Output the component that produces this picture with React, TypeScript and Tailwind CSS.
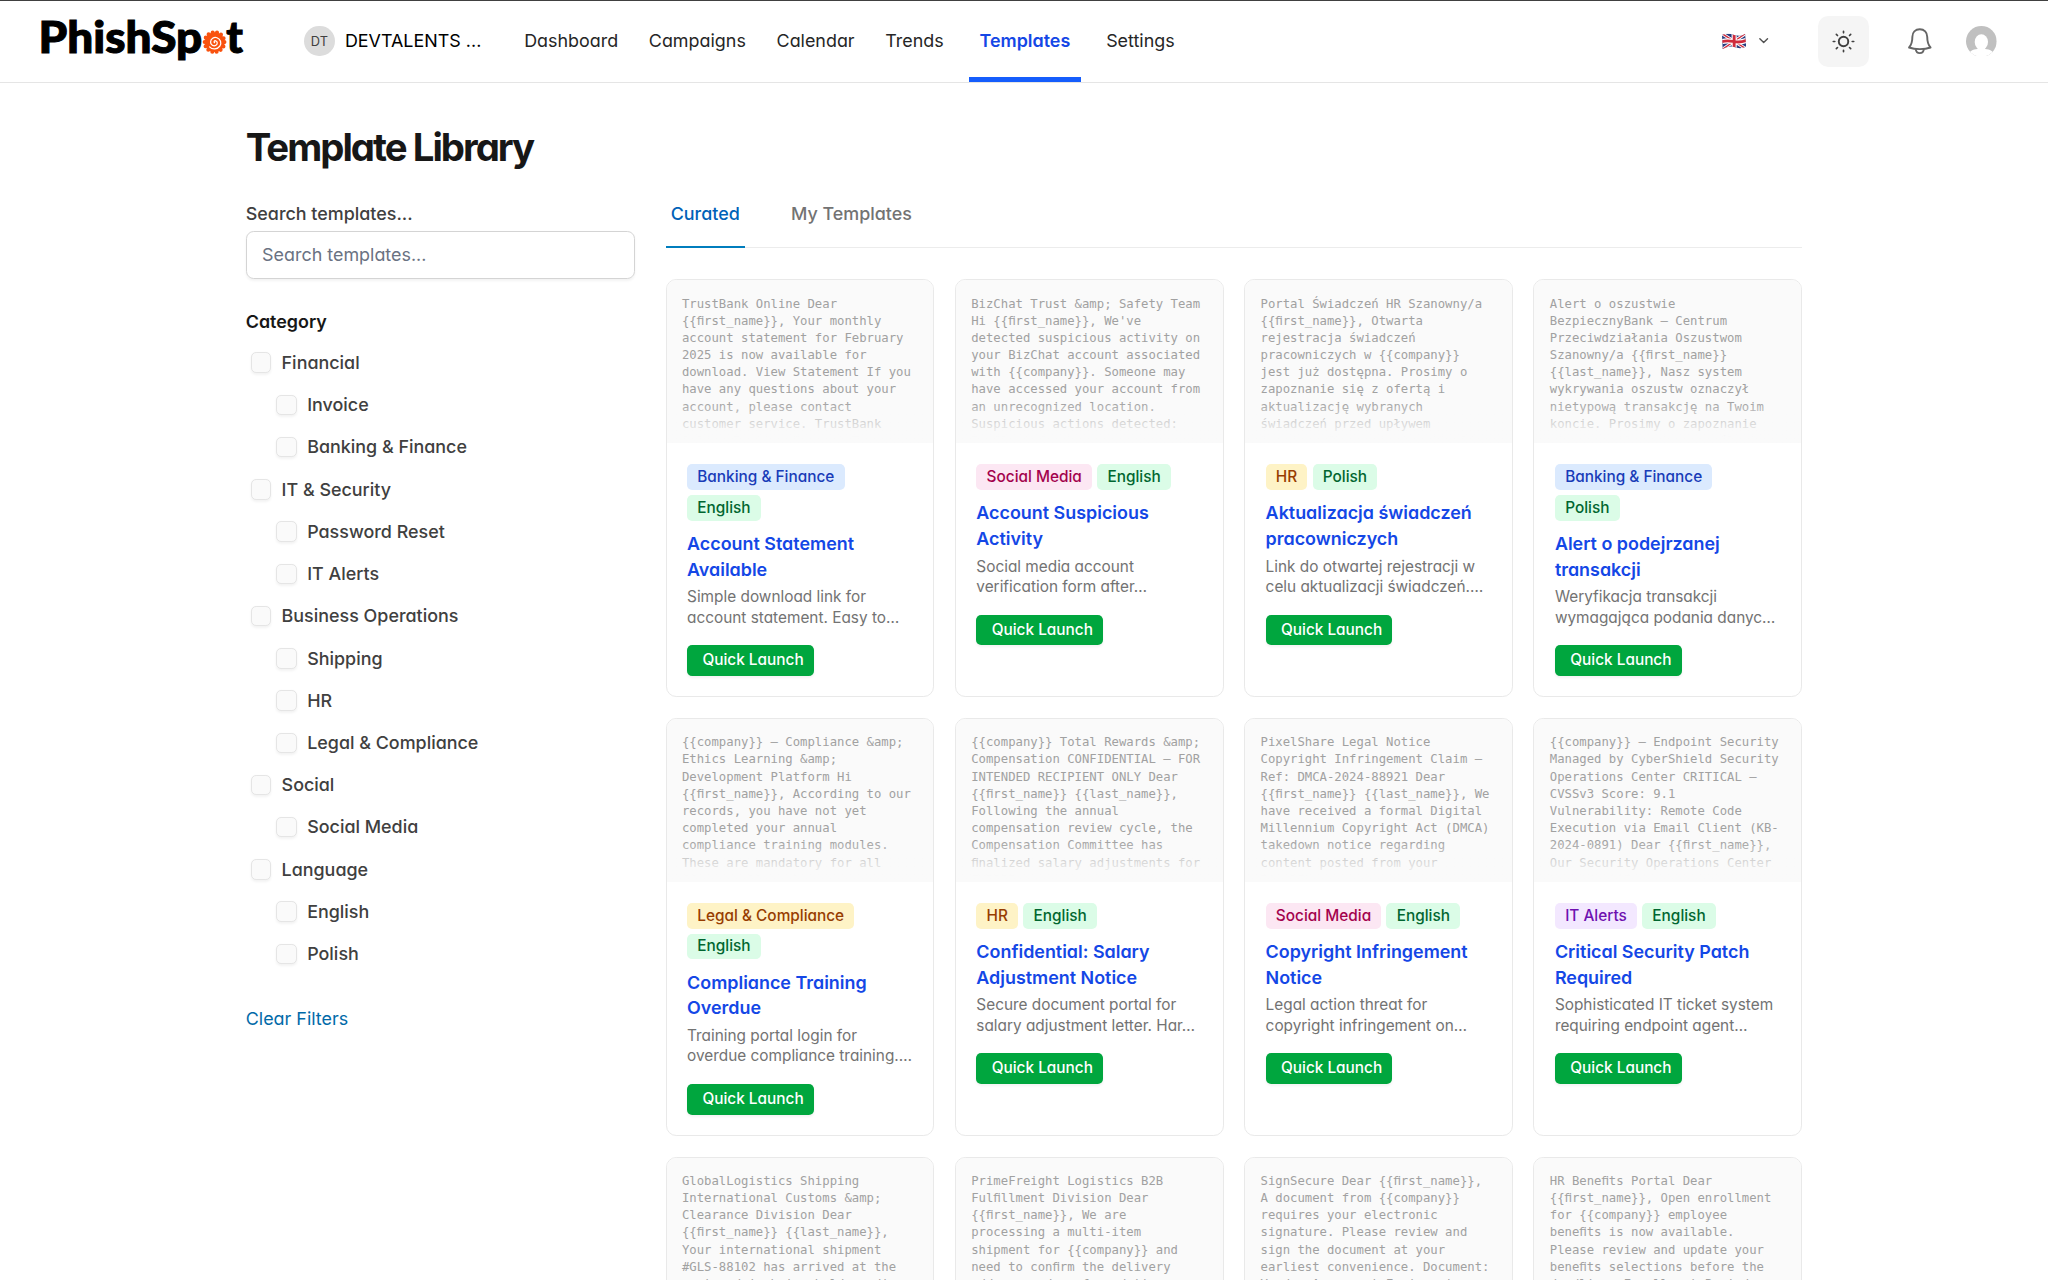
import { ChevronDown } from "lucide-react";

type Tag = "Banking & Finance" | "English" | "Polish" | "Social Media" | "HR" | "Legal & Compliance" | "IT Alerts";

type Template = {
  title: string;
  description: string;
  tags: Tag[];
  preview: string;
};

const navItems = ["Dashboard", "Campaigns", "Calendar", "Trends", "Templates", "Settings"];

const categories = [
  { name: "Financial", children: ["Invoice", "Banking & Finance"] },
  { name: "IT & Security", children: ["Password Reset", "IT Alerts"] },
  { name: "Business Operations", children: ["Shipping", "HR", "Legal & Compliance"] },
  { name: "Social", children: ["Social Media"] },
  { name: "Language", children: ["English", "Polish"] },
];

const tagStyles: Record<Tag, string> = {
  "Banking & Finance": "bg-blue-100 text-blue-800",
  English: "bg-green-100 text-green-800",
  Polish: "bg-green-100 text-green-800",
  "Social Media": "bg-pink-100 text-pink-800",
  HR: "bg-amber-100 text-amber-800",
  "Legal & Compliance": "bg-amber-100 text-amber-800",
  "IT Alerts": "bg-purple-100 text-purple-800",
};

const templates: Template[] = [
  {
    title: "Account Statement\nAvailable",
    description: "Simple download link for\naccount statement. Easy to…",
    tags: ["Banking & Finance", "English"],
    preview: `TrustBank Online Dear
{{first_name}}, Your monthly
account statement for February
2025 is now available for
download. View Statement If you
have any questions about your
account, please contact
customer service. TrustBank
Online Banking Support Team`,
  },
  {
    title: "Account Suspicious\nActivity",
    description: "Social media account\nverification form after…",
    tags: ["Social Media", "English"],
    preview: `BizChat Trust &amp; Safety Team
Hi {{first_name}}, We've
detected suspicious activity on
your BizChat account associated
with {{company}}. Someone may
have accessed your account from
an unrecognized location.
Suspicious actions detected:
Profile info changes`,
  },
  {
    title: "Aktualizacja świadczeń\npracowniczych",
    description: "Link do otwartej rejestracji w\ncelu aktualizacji świadczeń.…",
    tags: ["HR", "Polish"],
    preview: `Portal Świadczeń HR Szanowny/a
{{first_name}}, Otwarta
rejestracja świadczeń
pracowniczych w {{company}}
jest już dostępna. Prosimy o
zapoznanie się z ofertą i
aktualizację wybranych
świadczeń przed upływem
terminu. Okno rejestracji: Od`,
  },
  {
    title: "Alert o podejrzanej\ntransakcji",
    description: "Weryfikacja transakcji\nwymagająca podania danyc…",
    tags: ["Banking & Finance", "Polish"],
    preview: `Alert o oszustwie
BezpiecznyBank – Centrum
Przeciwdziałania Oszustwom
Szanowny/a {{first_name}}
{{last_name}}, Nasz system
wykrywania oszustw oznaczył
nietypową transakcję na Twoim
koncie. Prosimy o zapoznanie
się z poniższymi szczegółami`,
  },
  {
    title: "Compliance Training\nOverdue",
    description: "Training portal login for\noverdue compliance training.…",
    tags: ["Legal & Compliance", "English"],
    preview: `{{company}} – Compliance &amp;
Ethics Learning &amp;
Development Platform Hi
{{first_name}}, According to our
records, you have not yet
completed your annual
compliance training modules.
These are mandatory for all
{{company}} employees`,
  },
  {
    title: "Confidential: Salary\nAdjustment Notice",
    description: "Secure document portal for\nsalary adjustment letter. Har…",
    tags: ["HR", "English"],
    preview: `{{company}} Total Rewards &amp;
Compensation CONFIDENTIAL – FOR
INTENDED RECIPIENT ONLY Dear
{{first_name}} {{last_name}},
Following the annual
compensation review cycle, the
Compensation Committee has
finalized salary adjustments for
FY2025.`,
  },
  {
    title: "Copyright Infringement\nNotice",
    description: "Legal action threat for\ncopyright infringement on…",
    tags: ["Social Media", "English"],
    preview: `PixelShare Legal Notice
Copyright Infringement Claim –
Ref: DMCA-2024-88921 Dear
{{first_name}} {{last_name}}, We
have received a formal Digital
Millennium Copyright Act (DMCA)
takedown notice regarding
content posted from your
PixelShare`,
  },
  {
    title: "Critical Security Patch\nRequired",
    description: "Sophisticated IT ticket system\nrequiring endpoint agent…",
    tags: ["IT Alerts", "English"],
    preview: `{{company}} – Endpoint Security
Managed by CyberShield Security
Operations Center CRITICAL –
CVSSv3 Score: 9.1
Vulnerability: Remote Code
Execution via Email Client (KB-
2024-0891) Dear {{first_name}},
Our Security Operations Center
has identified`,
  },
  {
    title: "Customs Clearance\nRequired",
    description: "Customs payment form for\ninternational shipment…",
    tags: ["Banking & Finance", "English"],
    preview: `GlobalLogistics Shipping
International Customs &amp;
Clearance Division Dear
{{first_name}} {{last_name}},
Your international shipment
#GLS-88102 has arrived at the
port and is being held pending`,
  },
  {
    title: "Delivery Confirmation\nNeeded",
    description: "Delivery confirmation for\nmulti-item shipment…",
    tags: ["HR", "English"],
    preview: `PrimeFreight Logistics B2B
Fulfillment Division Dear
{{first_name}}, We are
processing a multi-item
shipment for {{company}} and
need to confirm the delivery
address and preferred time`,
  },
  {
    title: "Document Signature\nRequest",
    description: "Electronic signature request\nfor a document…",
    tags: ["HR", "English"],
    preview: `SignSecure Dear {{first_name}},
A document from {{company}}
requires your electronic
signature. Please review and
sign the document at your
earliest convenience. Document:
Vendor Agreement Expires in`,
  },
  {
    title: "Employee Benefits\nUpdate",
    description: "Open enrollment link for\nemployee benefits…",
    tags: ["HR", "English"],
    preview: `HR Benefits Portal Dear
{{first_name}}, Open enrollment
for {{company}} employee
benefits is now available.
Please review and update your
benefits selections before the
deadline. Enrollment Period`,
  },
];

function Logo() {
  return (
    <a href="#" className="flex h-8 w-[158px] items-center" aria-label="PhishSpot">
      <svg viewBox="0 0 158 32" className="h-8 w-[158px] overflow-visible">
        <g fontFamily="Lato, sans-serif" fontSize="33.7" fontWeight="900" fill="#000" stroke="#000" strokeWidth="0.8">
          <text x="-2" y="24.8" textLength="128" lengthAdjust="spacingAndGlyphs">PhishSp</text>
          <text x="144.8" y="24.8" textLength="13" lengthAdjust="spacingAndGlyphs">t</text>
        </g>
        <circle cx="135.6" cy="16.5" r="7.8" fill="#f9520f" />
        <circle
          cx="135.6"
          cy="16.5"
          r="7.7"
          fill="none"
          stroke="#f9520f"
          strokeWidth="3.2"
          strokeLinecap="round"
          strokeDasharray="0 3.456"
        />
        <path
          d="M135.6 16.9c-.8-.5-.2-1.7.9-1.4 1.5.4 1.6 2.7.2 3.5-1.9 1.1-4.3-.4-4.2-2.6.1-2.5 2.6-4.1 5-3.3 2.8.9 3.8 4.2 2.2 6.5-1.9 2.700-5.8 3-8 .6"
          fill="none"
          stroke="#fff"
          strokeWidth="1"
          strokeLinecap="round"
        />
      </svg>
    </a>
  );
}

function UkFlag() {
  return (
    <svg viewBox="0 0 38 26" className="h-[13px] w-[19px]">
      <defs>
        <clipPath id="flag">
          <path d="M0 3C7 0 12 1 19 3s12 2 17-2l2 20c-7 4-13 3-19 1s-11-1-18 3z" />
        </clipPath>
      </defs>
      <g clipPath="url(#flag)">
        <rect width="38" height="26" fill="#273a7e" />
        <path d="M0 1l38 24M38 0L0 26" stroke="#fff" strokeWidth="5" />
        <path d="M0 1l38 24M38 0L0 26" stroke="#cf2b3c" strokeWidth="2" />
        <path d="M19 0v26M0 13.5c8-2.5 13-1 19 0s12 1 19-2" stroke="#fff" strokeWidth="8" fill="none" />
        <path d="M19 0v26M0 13.5c8-2.5 13-1 19 0s12 1 19-2" stroke="#cf2b3c" strokeWidth="4.5" fill="none" />
      </g>
    </svg>
  );
}

function SunIcon() {
  return (
    <svg viewBox="0 0 18 18" className="size-[18px]" fill="none" stroke="#404040" strokeWidth="1.5">
      <circle cx="9" cy="9" r="3.7" />
      <path
        d="M9 1v1.2M9 15.8V17M1 9h1.2M15.8 9H17M3.4 3.4l.9.9M13.7 13.7l.9.9M14.6 3.4l-.9.9M4.3 13.7l-.9.9"
        strokeLinecap="round"
        strokeWidth="1.3"
      />
    </svg>
  );
}

function BellIcon() {
  return (
    <svg viewBox="0 0 20 22" className="h-[22px] w-5" fill="none" stroke="#666" strokeWidth="1.5" strokeLinejoin="round">
      <path d="M10 1.8c-3.5 0-5.8 2.5-5.8 5.9 0 4.3-.5 6.2-2.6 8.3 2.5.9 5.4 1.3 8.4 1.3s5.900-.4 8.400-1.3c-2.1-2.1-2.6-4-2.6-8.3 0-3.4-2.3-5.9-5.8-5.9z" />
      <path d="M6.8 17.2c.3 2.1 1.5 3.2 3.2 3.2s2.9-1.1 3.2-3.2" />
    </svg>
  );
}

function Header() {
  return (
    <header className="flex h-[65px] items-center border-b border-neutral-200 pl-8 pr-10">
      <Logo />
      <div className="ml-[47.5px] flex w-[143px] items-center gap-2">
        <span className="flex size-6 items-center justify-center rounded-full bg-[#dcdcdc] text-[10px] text-neutral-700">
          DT
        </span>
        <span className="text-sm whitespace-nowrap text-black">DEVTALENTS ...</span>
      </div>
      <nav className="ml-[21px] flex h-full items-stretch gap-2 text-sm">
        {navItems.map((item) => (
          <a
            key={item}
            href="#"
            className={
              item === "Templates"
                ? "mx-1 flex items-center border-b-4 border-blue-600 px-2 pt-1 font-semibold text-blue-700"
                : "flex items-center px-2 text-neutral-800"
            }
          >
            {item}
          </a>
        ))}
      </nav>
      <div className="ml-auto flex items-center">
        <UkFlag />
        <ChevronDown className="ml-[7.5px] size-3 text-neutral-600" strokeWidth={2.2} />
        <button className="ml-[36.5px] flex size-10 items-center justify-center rounded-lg bg-neutral-100">
          <SunIcon />
        </button>
        <div className="ml-[29.5px]">
          <BellIcon />
        </div>
        <svg viewBox="0 0 24 24" className="ml-[26.5px] size-6">
          <clipPath id="avatar">
            <circle cx="12" cy="12" r="12" />
          </clipPath>
          <g clipPath="url(#avatar)">
            <rect width="24" height="24" fill="#c0c0c0" />
            <ellipse cx="12" cy="12.5" rx="5.2" ry="6" fill="#fff" />
            <path d="M9 16h6v2c4 .3 6.5 1.5 7.5 6h-21c1-4.5 3.5-5.7 7.5-6z" fill="#fff" />
          </g>
        </svg>
      </div>
    </header>
  );
}

function FilterRow({ label, nested }: { label: string; nested?: boolean }) {
  return (
    <label className={nested ? "ml-6 flex h-[33px] items-center gap-2" : "ml-1 flex h-[33px] items-center gap-2"}>
      <span className="size-4 rounded border border-neutral-200 bg-neutral-50 shadow-xs" />
      <span className="text-sm font-medium text-neutral-700">{label}</span>
    </label>
  );
}

function Sidebar() {
  return (
    <aside className="w-[304px] shrink-0">
      <label className="block text-sm font-medium text-neutral-700">Search templates...</label>
      <input
        type="text"
        placeholder="Search templates..."
        className="mt-[3.5px] block h-[37.5px] w-full rounded-md border border-neutral-300 px-3 pb-px text-sm shadow-xs placeholder:text-gray-500"
      />
      <h3 className="mt-[23.6px] text-sm font-semibold text-neutral-900">Category</h3>
      <div className="mt-[5.5px]">
        {categories.map((category) => (
          <div key={category.name}>
            <FilterRow label={category.name} />
            {category.children.map((child) => (
              <FilterRow key={child} label={child} nested />
            ))}
          </div>
        ))}
      </div>
      <a href="#" className="mt-6 block text-sm text-sky-700">
        Clear Filters
      </a>
    </aside>
  );
}

function TemplateCard({ template }: { template: Template }) {
  // mono previews use the single-cell fi ligature
  const preview = template.preview.replaceAll("fi", "\uFB01");

  return (
    <div className="overflow-hidden rounded-lg border border-[#e9e9e9] bg-white">
      <div className="relative h-[127.4px] overflow-hidden bg-neutral-50 p-3">
        <p className="font-['DejaVu_Sans_Mono',monospace] text-[9.6px] leading-[1.4] whitespace-pre text-neutral-400">
          {preview}
        </p>
        <div className="absolute inset-x-0 bottom-0 h-8 bg-linear-to-t from-neutral-50 from-15% to-transparent" />
      </div>
      <div className="p-4 pt-[16.6px]">
        <div className="mb-2 flex flex-wrap gap-1">
          {template.tags.map((tag) => (
            <span key={tag} className={`rounded px-2 py-0.5 text-xs font-medium ${tagStyles[tag]}`}>
              {tag}
            </span>
          ))}
        </div>
        <h3 className="text-sm font-semibold whitespace-pre-line text-blue-700">{template.title}</h3>
        <p className="mt-1 text-xs whitespace-pre text-neutral-500">{template.description}</p>
        <button className="mt-[13.3px] flex h-6 items-center rounded bg-[#00a63e] pr-2 pl-3 text-xs font-medium text-white shadow-xs">
          Quick Launch
        </button>
      </div>
    </div>
  );
}

export default function App() {
  return (
    <div className="h-[1000px] w-[1600px] overflow-hidden bg-white font-['Inter',sans-serif] [font-feature-settings:'cv02','cv03','cv04','cv11'] [zoom:1.28]">
      <div className="-mb-px h-px bg-neutral-700" />
      <Header />
      <main className="mx-auto max-w-7xl px-8 pt-[31.5px]">
        <h1 className="text-3xl font-bold tracking-[-0.052em] text-neutral-900">Template Library</h1>
        <div className="mt-[24.3px] flex gap-6">
          <Sidebar />
          <section className="min-w-0 flex-1">
            <div className="flex gap-8 border-b border-[#ececec] text-sm font-medium">
              <a href="#" className="-mb-px border-b-2 border-[#007dbd] px-1 pb-[15.4px] text-[#0062b8]">
                Curated
              </a>
              <a href="#" className="px-1 pb-[15.4px] text-neutral-500">
                My Templates
              </a>
            </div>
            <div className="mt-[24.6px] grid grid-cols-4 gap-4">
              {templates.map((template) => (
                <TemplateCard key={template.title} template={template} />
              ))}
            </div>
          </section>
        </div>
      </main>
    </div>
  );
}
